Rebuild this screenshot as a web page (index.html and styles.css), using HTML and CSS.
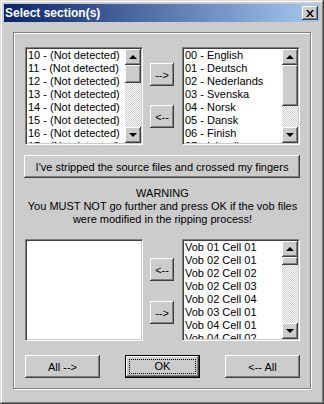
FILE: index.html
```html
<!DOCTYPE html>
<html lang="en">
<head>
    <meta charset="UTF-8">
    <meta name="viewport" content="width=device-width, initial-scale=1.0">
    <title>Select section(s)</title>
    <link rel="stylesheet" href="styles.css">
</head>
<body>
    <div class="window">
        <!-- Заголовок -->
        <div class="titlebar">
            <span class="title">Select section(s)</span>
            <button class="close" aria-label="Close">
                <svg width="8" height="7" viewBox="0 0 8 7">
                    <path d="M0 0h2l2 2.5L6 0h2L5 3.5 8 7H6L4 4.5 2 7H0l3-3.5z" fill="#000"/>
                </svg>
            </button>
        </div>

        <div class="client">
            <div class="frame">
                <!-- Верхні списки -->
                <div class="pair">
                    <div class="listbox">
                        <ul class="items">
                            <li>10 - (Not detected)</li>
                            <li>11 - (Not detected)</li>
                            <li>12 - (Not detected)</li>
                            <li>13 - (Not detected)</li>
                            <li>14 - (Not detected)</li>
                            <li>15 - (Not detected)</li>
                            <li>16 - (Not detected)</li>
                            <li>17 - (Not detected)</li>
                        </ul>
                        <div class="scrollbar">
                            <div class="sb-btn"><span class="arrow up"></span></div>
                            <div class="sb-thumb thumb-a"></div>
                            <div class="sb-track"></div>
                            <div class="sb-btn"><span class="arrow down"></span></div>
                        </div>
                    </div>
                    <div class="movers movers-top">
                        <button class="btn small">--&gt;</button>
                        <button class="btn small">&lt;--</button>
                    </div>
                    <div class="listbox">
                        <ul class="items">
                            <li>00 - English</li>
                            <li>01 - Deutsch</li>
                            <li>02 - Nederlands</li>
                            <li>03 - Svenska</li>
                            <li>04 - Norsk</li>
                            <li>05 - Dansk</li>
                            <li>06 - Finish</li>
                            <li>07 - Islandic</li>
                        </ul>
                        <div class="scrollbar">
                            <div class="sb-btn"><span class="arrow up"></span></div>
                            <div class="sb-thumb thumb-b"></div>
                            <div class="sb-track"></div>
                            <div class="sb-btn"><span class="arrow down"></span></div>
                        </div>
                    </div>
                </div>

                <button class="btn wide">I've stripped the source files and crossed my fingers</button>

                <p class="warning">WARNING<br>You MUST NOT go further and press OK if the vob files<br>were modified in the ripping process!</p>

                <!-- Нижні списки -->
                <div class="pair pair-low">
                    <div class="listbox">
                        <ul class="items"></ul>
                    </div>
                    <div class="movers movers-low">
                        <button class="btn small">&lt;--</button>
                        <button class="btn small">--&gt;</button>
                    </div>
                    <div class="listbox">
                        <ul class="items">
                            <li>Vob 01 Cell 01</li>
                            <li>Vob 02 Cell 01</li>
                            <li>Vob 02 Cell 02</li>
                            <li>Vob 02 Cell 03</li>
                            <li>Vob 02 Cell 04</li>
                            <li>Vob 03 Cell 01</li>
                            <li>Vob 04 Cell 01</li>
                            <li>Vob 04 Cell 02</li>
                        </ul>
                        <div class="scrollbar">
                            <div class="sb-btn"><span class="arrow up"></span></div>
                            <div class="sb-thumb thumb-c"></div>
                            <div class="sb-track"></div>
                            <div class="sb-btn"><span class="arrow down"></span></div>
                        </div>
                    </div>
                </div>

                <div class="actions">
                    <button class="btn action">All --&gt;</button>
                    <button class="btn action default"><span class="focus">OK</span></button>
                    <button class="btn action">&lt;-- All</button>
                </div>
            </div>
        </div>
    </div>
</body>
</html>
```

FILE: styles.css
```css
* {
    box-sizing: border-box;
}
body {
    margin: 0;
    padding: 0;
    font-family: "Liberation Sans", Arial, sans-serif;
    font-size: 11px;
    color: #000;
    background-color: #cccccc;
}
.window {
    width: 324px;
    height: 404px;
    padding: 4px;
    background: #cccccc;
    box-shadow: inset -1px -1px #404040, inset 1px 1px #dcdcdc,
                inset -2px -2px #808080, inset 2px 2px #fff;
}
.titlebar {
    height: 18px;
    display: flex;
    align-items: center;
    justify-content: space-between;
    padding: 0 2px 0 1px;
    background: linear-gradient(90deg, #0a246a, #a6caf0);
}
.title {
    color: #fff;
    font-weight: bold;
    font-size: 12px;
    line-height: 18px;
}
.close {
    width: 16px;
    height: 14px;
    padding: 0;
    border: none;
    display: flex;
    align-items: center;
    justify-content: center;
    background: #cccccc;
    box-shadow: inset -1px -1px #404040, inset 1px 1px #fff, inset -2px -2px #808080;
}
.client {
    padding: 10px 0 0 9px;
}
.frame {
    width: 298px;
    padding: 14px 10px 10px 11px;
    border: 1px solid #808080;
    box-shadow: 1px 1px 0 #fff, inset 1px 1px 0 #fff;
}
.pair {
    display: flex;
    height: 98px;
}
.pair-low {
    height: 102px;
    margin-top: 13px;
}
.listbox {
    width: 118px;
    height: 100%;
    display: flex;
    background: #fff;
    border: 1px solid;
    border-color: #808080 #fff #fff #808080;
    box-shadow: inset 1px 1px #404040, inset -1px -1px #cccccc;
    padding: 1px;
    overflow: hidden;
}
.items {
    flex: 1;
    list-style: none;
    margin: 0;
    padding: 0 0 0 1px;
    overflow: hidden;
}
.items li {
    height: 13px;
    line-height: 13px;
    white-space: nowrap;
}
.scrollbar {
    width: 16px;
    display: flex;
    flex-direction: column;
}
.sb-btn, .sb-thumb {
    background: #cccccc;
    box-shadow: inset -1px -1px #404040, inset 1px 1px #fff,
                inset -2px -2px #808080;
}
.sb-btn {
    height: 16px;
    flex: none;
    display: flex;
    align-items: center;
    justify-content: center;
}
.sb-track {
    flex: 1;
    background: repeating-conic-gradient(#fff 0 25%, #cccccc 0 50%) 0 0 / 2px 2px;
}
.thumb-a { height: 18px; }
.thumb-b { height: 41px; }
.thumb-c { height: 8px; }
.arrow {
    width: 0;
    height: 0;
    border-left: 4px solid transparent;
    border-right: 4px solid transparent;
}
.arrow.up {
    border-bottom: 4px solid #000;
    margin-top: -1px;
}
.arrow.down {
    border-top: 4px solid #000;
}
.movers {
    width: 24px;
    margin: 0 8px 0 7px;
    display: flex;
    flex-direction: column;
}
.movers-top {
    padding-top: 16px;
    gap: 19px;
}
.movers-low {
    padding-top: 19px;
    gap: 20px;
}
.btn {
    font-family: "Liberation Sans", Arial, sans-serif;
    font-size: 11px;
    color: #000;
    height: 23px;
    padding: 0;
    border: none;
    background: #cccccc;
    box-shadow: inset -1px -1px #404040, inset 1px 1px #fff,
                inset -2px -2px #808080;
}
.small {
    width: 24px;
}
.wide {
    display: block;
    width: 276px;
    margin: 10px 0 0 -1px;
}
.warning {
    margin: 9px 0 0;
    text-align: center;
    line-height: 13px;
}
.actions {
    display: flex;
    justify-content: space-between;
    margin-top: 14px;
}
.action {
    width: 75px;
}
.default {
    border: 1px solid #000;
    padding: 3px;
}
.focus {
    display: block;
    height: 100%;
    line-height: 13px;
    border: 1px dotted #000;
}
```
